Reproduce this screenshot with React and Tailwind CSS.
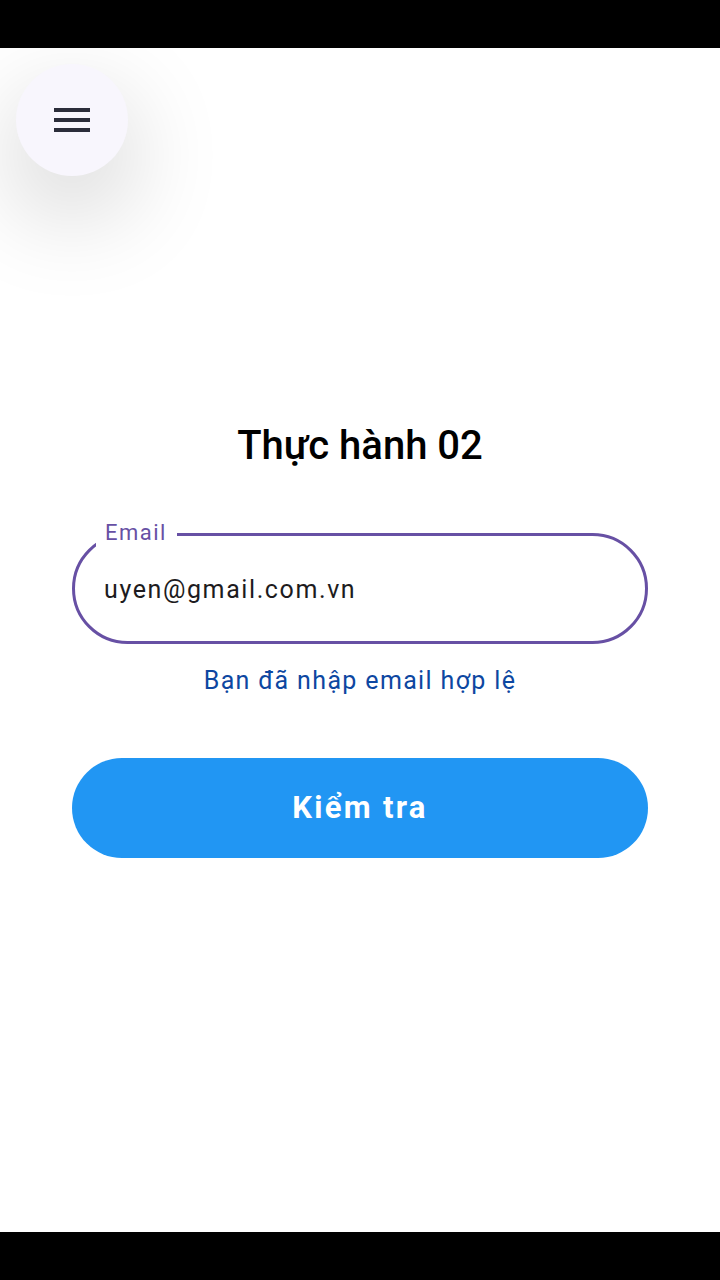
export default function App() {
  return (
    <div className="flex h-[1280px] w-[720px] flex-col bg-white" style={{ fontFamily: 'Roboto, "Noto Sans", sans-serif' }}>
      <div className="h-12 shrink-0 bg-black" />
      <div className="flex flex-1 flex-col overflow-hidden bg-white">
        <div className="px-4 pt-4">
          <button className="flex h-[112px] w-[112px] flex-col items-center justify-center gap-[6px] rounded-full bg-[#f8f6fd] shadow-[0_35px_100px_rgba(0,0,0,0.2)]">
            <span className="block h-[4px] w-[36px] bg-[#2b2d3a]" />
            <span className="block h-[4px] w-[36px] bg-[#2b2d3a]" />
            <span className="block h-[4px] w-[36px] bg-[#2b2d3a]" />
          </button>
        </div>
        <h1 className="mt-[246px] text-center text-[40px] font-medium leading-[48px] text-black">Thực hành 02</h1>
        <div className="mx-[72px] mt-[63px]">
          <div className="relative flex h-[111px] items-center rounded-full border-[3px] border-[#6750a4] pl-[29px]">
            <span className="absolute left-[21px] top-[-17px] bg-white pl-[9px] pr-[10px] text-[22px] leading-[28px] tracking-[1.5px] text-[#6750a4]">Email</span>
            <span className="mt-[3px] text-[25px] leading-[32px] tracking-[1.6px] text-[#1d1b20]">uyen@gmail.com.vn</span>
          </div>
        </div>
        <p className="mt-[21px] text-center text-[25px] leading-[32px] tracking-[1.35px] text-[#0d47a1]">Bạn đã nhập email hợp lệ</p>
        <div className="mx-[72px] mt-[61px]">
          <button className="flex h-[100px] w-full items-center justify-center rounded-full bg-[#2196f3] text-[31px] font-bold tracking-[2.3px] text-white">Kiểm tra</button>
        </div>
      </div>
      <div className="h-12 shrink-0 bg-black" />
    </div>
  );
}
